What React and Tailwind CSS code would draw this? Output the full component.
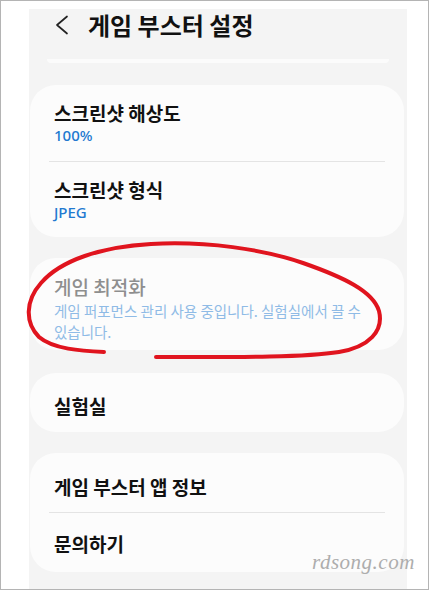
import React from "react";

const kr = { fontFamily: '"Noto Sans CJK KR", "Noto Sans", sans-serif' };

const Row = ({ title, sub, divider, muted, desc, className = "" }) => (
  <div className={`${divider ? "border-t border-[#e4e4e4] mx-[19px] px-[5px]" : "px-[24px]"} ${className}`}>
    <div
      className={`text-[19px] leading-[24px] ${muted ? "text-[#8e8e8e] font-medium" : "text-[#111111] font-bold"}`}
      style={kr}
    >
      {title}
    </div>
    {sub && (
      <div className="text-[15px] leading-[20px] font-medium text-[#2279d0]" style={{ fontFamily: '"Noto Sans", sans-serif' }}>
        {sub}
      </div>
    )}
    {desc && (
      <div className="mt-[1px] text-[14.5px] leading-[21px] text-[#8fbbe6]" style={kr}>
        {desc.map((line) => (
          <div key={line}>{line}</div>
        ))}
      </div>
    )}
  </div>
);

const Card = ({ children, className = "" }) => (
  <div className={`ml-[1px] mr-[3px] rounded-[26px] bg-[#fcfcfc] ${className}`}>{children}</div>
);

export default function App() {
  return (
    <div className="relative w-[429px] h-[590px] overflow-hidden border border-[#b4b4b4] bg-white">
      <div className="ml-[28px] w-[378px] h-full bg-[#f4f4f4]">
        <div className="flex items-center h-[32px] mt-[8px]">
          <svg width="14" height="20" viewBox="0 0 14 20" className="ml-[26px]">
            <polyline points="12,1.5 2,10 12,18.5" fill="none" stroke="#222" strokeWidth="1.7" strokeLinejoin="round" strokeLinecap="round" />
          </svg>
          <div className="ml-[19px] text-[24px] leading-[32px] font-bold text-[#111]" style={kr}>
            게임 부스터 설정
          </div>
        </div>
        <div className="mt-[18px] mx-[18px] h-[4px] rounded-b-full bg-[#fbfbfb]" />

        <Card className="mt-[22px]">
          <Row title="스크린샷 해상도" sub="100%" className="pt-[16px] pb-[16px]" />
          <Row title="스크린샷 형식" sub="JPEG" divider className="pt-[16px] pb-[15px]" />
        </Card>

        <Card className="mt-[21px]">
          <Row
            title="게임 최적화"
            muted
            desc={["게임 퍼포먼스 관리 사용 중입니다. 실험실에서 끌 수", "있습니다."]}
            className="pt-[17px] pb-[8px]"
          />
        </Card>

        <Card className="mt-[23px]">
          <Row title="실험실" className="pt-[21px] pb-[14px]" />
        </Card>

        <Card className="mt-[21px]">
          <Row title="게임 부스터 앱 정보" className="pt-[22px] pb-[13px]" />
          <Row title="문의하기" divider className="pt-[19px] pb-[16px]" />
        </Card>
      </div>

      <svg className="absolute left-0 top-0 pointer-events-none" width="429" height="590" viewBox="0 0 429 590">
        <path
          d="M103,351 C80,350 52,348 38,336 C24,322 24,300 40,282 C60,259 100,246 150,243 C205,240 262,248 302,262 C342,276 372,290 378,310 C383,330 368,346 338,351 C300,357 220,356 155,356"
          fill="none"
          stroke="#e0141e"
          strokeWidth="4"
          strokeLinecap="round"
        />
      </svg>

      <div
        className="absolute left-[311px] top-[546px] text-[21px] italic text-[#adadad] tracking-[0.5px]"
        style={{ fontFamily: '"Liberation Serif", serif' }}
      >
        rdsong.com
      </div>
    </div>
  );
}
